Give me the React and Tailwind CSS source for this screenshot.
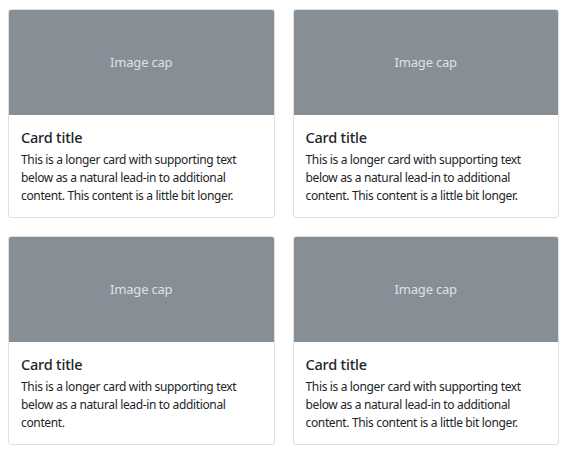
import React from 'react';

const cards = [
  { text: 'This is a longer card with supporting text below as a natural lead-in to additional content. This content is a little bit longer.' },
  { text: 'This is a longer card with supporting text below as a natural lead-in to additional content. This content is a little bit longer.' },
  { text: 'This is a longer card with supporting text below as a natural lead-in to additional content.' },
  { text: 'This is a longer card with supporting text below as a natural lead-in to additional content. This content is a little bit longer.' },
];

const Card = ({ text }) => (
  <div className="flex flex-col overflow-hidden rounded-[3px] border border-[#dfdfdf] bg-white">
    <div className="flex h-[105px] items-center justify-center bg-[#868e96] text-[13px] tracking-[-0.2px] text-[#dee2e6]">
      Image cap
    </div>
    <div className="px-[12px] pb-[12px] pt-[13px]">
      <h5 className="mb-[4px] text-[14.5px] leading-[19px] font-medium tracking-[-0.2px] text-[#212529]">Card title</h5>
      <p className="text-[12px] leading-[18px] tracking-[-0.35px] text-[#212529]">{text}</p>
    </div>
  </div>
);

export default function App() {
  return (
    <div className="min-h-screen bg-white px-[8px] pt-[9px] font-['Noto_Sans',_'Open_Sans',_sans-serif]">
      <div className="grid w-[551px] grid-cols-2 gap-x-[18px] gap-y-[18px]">
        {cards.map((c, i) => (
          <Card key={i} text={c.text} />
        ))}
      </div>
    </div>
  );
}
